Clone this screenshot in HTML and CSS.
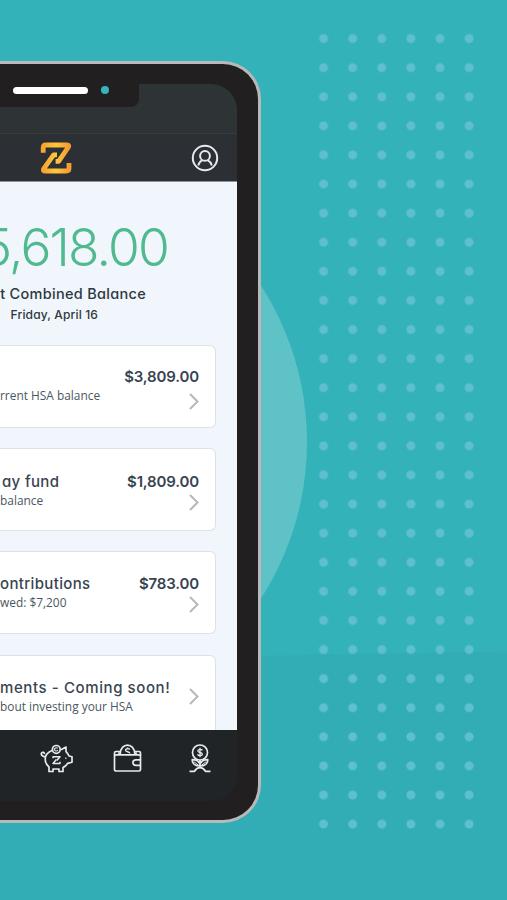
FILE: index.html
```html
<!DOCTYPE html>
<html lang="en">
<head>
    <meta charset="UTF-8">
    <meta name="viewport" content="width=device-width, initial-scale=1.0">
    <title>HSA Balance</title>
    <link rel="stylesheet" href="styles.css">
</head>
<body>
    <div class="circle"></div>
    <div class="dots"></div>

    <div class="phone">
        <div class="screen">
            <div class="status"></div>
            <header class="header">
                <svg class="logo" width="32" height="32" viewBox="0 0 32 32" fill="none">
                    <defs>
                        <linearGradient id="gold" x1="0" x2="1">
                            <stop offset="0" stop-color="#f7a531"/>
                            <stop offset=".5" stop-color="#fdc73c"/>
                            <stop offset="1" stop-color="#f59c32"/>
                        </linearGradient>
                    </defs>
                    <g stroke="url(#gold)" stroke-width="4.8" stroke-linejoin="round">
                        <path d="M3.2 10.8V5.8Q3.2 3 6 3H27Q29.8 3 28.2 5.4L18.6 19.4H15.6"/>
                        <path d="M29 21V26.2Q29 29 26.2 29H5Q2.2 29 3.8 26.6L13.6 12.8H17"/>
                    </g>
                </svg>
                <svg class="user" width="28" height="28" viewBox="0 0 28 28" fill="none" stroke="#e3eaee" stroke-width="2">
                    <circle cx="14" cy="14" r="12.2"/>
                    <circle cx="14" cy="11.9" r="4.9"/>
                    <path d="M7.2 21.5C8.1 18.6 9.7 17 11.4 16.2M20.8 21.5C19.9 18.6 18.3 17 16.6 16.2"/>
                </svg>
            </header>

            <main class="content">
                <div class="total">5,618.00</div>
                <div class="total-label">t Combined Balance</div>
                <div class="total-date">Friday, April 16</div>

                <section class="card card-current">
                    <div class="info">
                        <h2></h2>
                        <p>rrent HSA balance</p>
                    </div>
                    <div class="side">
                        <strong>$3,809.00</strong>
                        <svg class="chevron" width="10" height="17" viewBox="0 0 10 17"><path d="M1 1L8.5 8.5L1 16"/></svg>
                    </div>
                </section>
                <section class="card card-fund">
                    <div class="info">
                        <h2>ay fund</h2>
                        <p>balance</p>
                    </div>
                    <div class="side">
                        <strong>$1,809.00</strong>
                        <svg class="chevron" width="10" height="17" viewBox="0 0 10 17"><path d="M1 1L8.5 8.5L1 16"/></svg>
                    </div>
                </section>
                <section class="card card-contrib">
                    <div class="info">
                        <h2>ontributions</h2>
                        <p>wed: $7,200</p>
                    </div>
                    <div class="side">
                        <strong>$783.00</strong>
                        <svg class="chevron" width="10" height="17" viewBox="0 0 10 17"><path d="M1 1L8.5 8.5L1 16"/></svg>
                    </div>
                </section>
                <section class="card card-invest">
                    <div class="info">
                        <h2>ments - Coming soon!</h2>
                        <p>bout investing your HSA</p>
                    </div>
                    <div class="side">
                        <svg class="chevron" width="10" height="17" viewBox="0 0 10 17"><path d="M1 1L8.5 8.5L1 16"/></svg>
                    </div>
                </section>
            </main>

            <nav class="nav">
                <svg class="pig" width="34" height="30" viewBox="0 0 34 30">
                    <path d="M12 6.5C7.6 8.2 5.2 11.5 5.2 15.3C5.2 18.5 6.8 21 9 23V27.5H13V25H19V27.5H23V23.6C25 22.6 26.5 21 27.6 19.4L32 18.2V12.8L29 12C28.3 10.2 27.3 8.8 26 7.6V3L21 5.8"/>
                    <path d="M5.2 12.8C1.6 12.4 .8 10.2 1.6 9C2.6 7.6 4.7 8.4 4.2 10.1"/>
                    <circle cx="16.3" cy="5.4" r="3.9"/>
                    <path d="M17.8 4.2C15.8 3.1 14.4 4.3 14.5 5.5C14.6 7 16.5 7.5 18 6.3" stroke-width="1.1"/>
                    <path d="M13 14.3V12.7H20L16.8 16.4M20 17.8V19.4H13L16.3 15.6" stroke-width="1.5"/>
                    <path d="M25.8 13.4V15" stroke-width="1.1"/>
                </svg>
                <svg class="wallet" width="30" height="30" viewBox="0 0 30 30">
                    <rect x="1.5" y="10.8" width="26" height="16.2" rx="1.6"/>
                    <path d="M1.5 12V9Q1.5 7.5 3 7.5H7M22 7.5H26Q27.5 7.5 27.5 9V12"/>
                    <path d="M6 10.5V8.2M23 10.5V8.2"/>
                    <path d="M7.2 10.3C7.2 -2 21.8 -2 21.8 10.3"/>
                    <path d="M27.5 15.8H23C18.9 15.8 18.9 21.4 23 21.4H27.5"/>
                    <path d="M16.8 5.5C15.8 4.2 12.5 4.4 12.5 6.2C12.5 8.2 17 7.3 16.8 9.5M14.7 3.4V5" stroke-width="1.4"/>
                </svg>
                <svg class="plant" width="24" height="30" viewBox="0 0 24 30">
                    <circle cx="12" cy="8.5" r="7.5"/>
                    <path d="M14.4 6.4C13.6 4.8 9.8 5 9.8 6.9C9.8 9 14.5 8 14.4 10.2C14.3 12 10.3 12 9.5 10.4M12 3.8V13.2" stroke-width="1.3"/>
                    <path d="M12 16V24M12 20C10 16.4 7 15.6 4.2 15.7C4.2 19.5 7.2 22 12 22C16.8 22 19.8 19.5 19.8 15.7C17 15.6 14 16.4 12 20"/>
                    <path d="M6 17.8L11.5 22M18 17.8L12.5 22" stroke-width="1"/>
                    <path d="M1.5 27.3H6.5C8 24.8 10 23.6 12 23.6C14 23.6 16 24.8 17.5 27.3H22.5"/>
                </svg>
            </nav>
        </div>
        <div class="notch">
            <span class="speaker"></span>
            <span class="camera"></span>
        </div>
    </div>
</body>
</html>
```
FILE: styles.css
```css
* {
    box-sizing: border-box;
}

body {
    margin: 0;
    position: relative;
    height: 900px;
    padding-top: 61px;
    overflow: hidden;
    font-family: Inter, "Liberation Sans", sans-serif;
    font-feature-settings: "cv11";
    color: #2d3840;
    background: linear-gradient(179deg, #34b2ba 0, #34b2ba 659px, #32adb5 661px);
}

h2, p {
    margin: 0;
}

/* background shapes */
.circle {
    position: absolute;
    left: -271px;
    top: 153px;
    width: 578px;
    height: 578px;
    border-radius: 50%;
    background: #5fc2c7;
}

.dots {
    position: absolute;
    left: 308.5px;
    top: 24px;
    width: 174.8px;
    height: 815px;
    background: radial-gradient(circle, #5dc0cc 4px, transparent 4.9px) 0 0 / 29.12px 29.1px;
}

/* phone */
.phone {
    position: relative;
    width: 260.5px;
    height: 762px;
    padding: 20px 20px 20px 0;
    border: 3px solid #b9b8ba;
    border-left: 0;
    border-radius: 0 38px 38px 0;
    background: #221f20;
}

.screen {
    display: flex;
    flex-direction: column;
    width: 237px;
    height: 717px;
    overflow: hidden;
    border-radius: 0 26px 26px 0;
    background: #202427;
}

.notch {
    position: absolute;
    left: 0;
    top: 20px;
    display: flex;
    align-items: flex-start;
    width: 139px;
    height: 23px;
    padding-left: 13px;
    border-radius: 0 0 8px 0;
    background: #221f20;
}

.speaker {
    width: 75px;
    height: 7px;
    margin: 3px 13px 0 0;
    border-radius: 4px;
    background: #fff;
}

.camera {
    width: 8px;
    height: 8px;
    margin-top: 2px;
    border-radius: 50%;
    background: #35b5bb;
}

.status {
    flex: none;
    height: 50px;
    border-bottom: 1px solid #343c3e;
    background: #2e3335;
}

.header {
    flex: none;
    display: flex;
    align-items: center;
    justify-content: space-between;
    height: 48px;
    padding: 0 18px 0 40px;
    border-bottom: 1px solid #8d9296;
    background: #2c3034;
}

.content {
    flex: none;
    height: 548px;
    padding: 35px 21px 0 0;
    overflow: hidden;
    background: #f1f5fc;
}

.total, .total-label, .total-date {
    display: flex;
    justify-content: flex-end;
    white-space: nowrap;
}

.total {
    height: 60px;
    padding-right: 48px;
    font-size: 51.5px;
    font-weight: 300;
    line-height: 60px;
    letter-spacing: -1.8px;
    color: #4fb98f;
}

.total-label {
    height: 20px;
    margin-top: 7px;
    padding-right: 70px;
    font-size: 14.5px;
    font-weight: 500;
    line-height: 20px;
    letter-spacing: 0.3px;
}

.total-date {
    height: 18px;
    margin: 2px 0 21px;
    padding-right: 118px;
    font-size: 12px;
    font-weight: 500;
    line-height: 18px;
    letter-spacing: 0.15px;
}

.card {
    display: flex;
    justify-content: space-between;
    height: 83px;
    margin-bottom: 20.2px;
    padding: 23px 16px 0 0;
    border: 1px solid #dce1e6;
    border-left: 0;
    border-radius: 0 6px 6px 0;
    background: #fff;
    color: #384550;
    white-space: nowrap;
}

.info h2 {
    height: 20px;
    font-size: 15px;
    font-weight: 500;
    line-height: 20px;
    letter-spacing: 0.35px;
}

.info p {
    font-family: "Open Sans", sans-serif;
    font-size: 11.9px;
    line-height: 16px;
    color: #4a5761;
}

.side {
    display: flex;
    flex-direction: column;
    align-items: flex-end;
}

.side strong {
    height: 20px;
    font-size: 15px;
    font-weight: 600;
    line-height: 20px;
    letter-spacing: -0.15px;
}

.chevron {
    margin-top: 2px;
    fill: none;
    stroke: #b6b8ba;
    stroke-width: 2;
}

.card-current {
    padding-top: 21px;
}

.card-current .chevron {
    margin-top: 6px;
}

.card-fund h2 {
    padding-left: 2px;
}

.card-contrib, .card-invest {
    padding-top: 22px;
}

.card-invest h2 {
    letter-spacing: 0.6px;
}

.card-invest .chevron {
    margin-top: 10px;
}

.nav {
    flex: none;
    display: flex;
    padding: 14px 0 0 40px;
}

.nav svg {
    fill: none;
    stroke: #e4eaed;
    stroke-width: 1.7;
    stroke-linejoin: round;
}

.wallet {
    margin-left: 39px;
}

.plant {
    margin-left: 45px;
}
```
